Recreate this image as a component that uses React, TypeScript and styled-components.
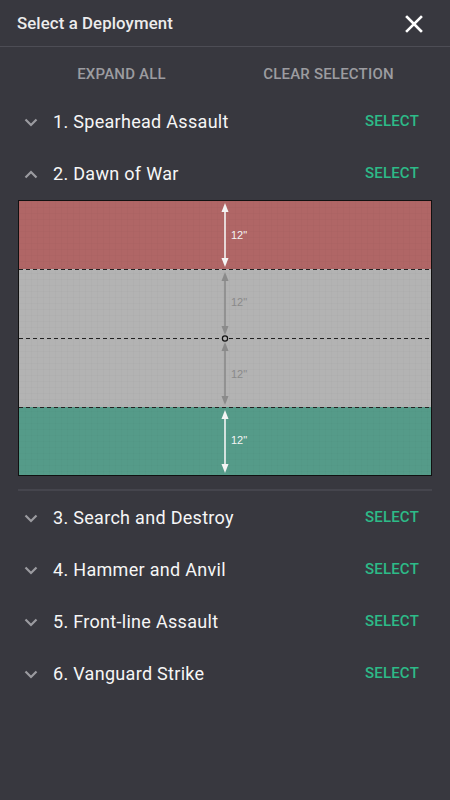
import React from "react";
import styled, { createGlobalStyle } from "styled-components";

const GlobalStyle = createGlobalStyle`
  html, body {
    margin: 0;
    padding: 0;
    background: #38383f;
  }
  body {
    font-family: Roboto, "Liberation Sans", sans-serif;
  }
`;

const deployments = [
    "Spearhead Assault",
    "Dawn of War",
    "Search and Destroy",
    "Hammer and Anvil",
    "Front-line Assault",
    "Vanguard Strike",
];

const Chevron = ({up}: { up?: boolean }) => (
    <svg width="14" height="9" viewBox="0 0 14 9">
        <path
            d={up ? "M1.5 7.5 L7 2 L12.5 7.5" : "M1.5 1.5 L7 7 L12.5 1.5"}
            fill="none"
            stroke="#9b9ba0"
            strokeWidth="2.2"
        />
    </svg>
);

const CloseIcon = () => (
    <svg width="18" height="18" viewBox="0 0 18 18">
        <path d="M2 2 L16 16 M16 2 L2 16" stroke="#ffffff" strokeWidth="2.6" strokeLinecap="square"/>
    </svg>
);

const Arrow = ({y1, y2, color}: { y1: number; y2: number; color: string }) => (
    <g>
        <line x1="206" y1={y1 + 8} x2="206" y2={y2 - 8} stroke={color} strokeWidth="1.6"/>
        <polygon points={`206,${y1} 202.5,${y1 + 9} 209.5,${y1 + 9}`} fill={color}/>
        <polygon points={`206,${y2} 202.5,${y2 - 9} 209.5,${y2 - 9}`} fill={color}/>
    </g>
);

const DawnOfWarMap = () => (
    <svg width="412" height="274" viewBox="0 0 412 274">
        <defs>
            <pattern id="grid" width="6" height="6" patternUnits="userSpaceOnUse">
                <path d="M6 0 L0 0 L0 6" fill="none" stroke="#000" strokeOpacity="0.03" strokeWidth="1"/>
            </pattern>
        </defs>
        <rect x="0" y="0" width="412" height="68" fill="#b06666"/>
        <rect x="0" y="68" width="412" height="138" fill="#b3b3b3"/>
        <rect x="0" y="206" width="412" height="68" fill="#559b89"/>
        <rect x="0" y="0" width="412" height="274" fill="url(#grid)"/>
        <line x1="0" y1="68.5" x2="412" y2="68.5" stroke="#222" strokeDasharray="4 3"/>
        <line x1="0" y1="137.5" x2="412" y2="137.5" stroke="#222" strokeDasharray="4 3"/>
        <line x1="0" y1="206.5" x2="412" y2="206.5" stroke="#222" strokeDasharray="4 3"/>
        <Arrow y1={2} y2={66} color="#f4f4f4"/>
        <Arrow y1={71} y2={134} color="#8a8a8a"/>
        <Arrow y1={141} y2={204} color="#8a8a8a"/>
        <Arrow y1={209} y2={272} color="#f4f4f4"/>
        <circle cx="206" cy="137.5" r="2.6" fill="#b3b3b3" stroke="#111" strokeWidth="1.2"/>
        <MapLabel x="212" y="38" fill="#f4f4f4">12"</MapLabel>
        <MapLabel x="212" y="105" fill="#8a8a8a">12"</MapLabel>
        <MapLabel x="212" y="177" fill="#8a8a8a">12"</MapLabel>
        <MapLabel x="212" y="243" fill="#f4f4f4">12"</MapLabel>
    </svg>
);

const App = () => {
    return (
        <>
            <GlobalStyle/>
            <Panel>
                <Header>
                    <Title>Select a Deployment</Title>
                    <CloseButton><CloseIcon/></CloseButton>
                </Header>
                <Actions>
                    <ActionButton>Expand all</ActionButton>
                    <ActionButton>Clear selection</ActionButton>
                </Actions>
                <List>
                    {deployments.map((name, i) => {
                        const open = i === 1;
                        return (
                            <Item key={name} $open={open}>
                                <Row>
                                    <ChevronBox><Chevron up={open}/></ChevronBox>
                                    <Name>{i + 1}. {name}</Name>
                                    <SelectButton>Select</SelectButton>
                                </Row>
                                {open && (
                                    <MapFrame>
                                        <DawnOfWarMap/>
                                    </MapFrame>
                                )}
                            </Item>
                        );
                    })}
                </List>
            </Panel>
        </>
    );
};

const Panel = styled.div`
  width: 450px;
  min-height: 800px;
  background: #38383f;
  color: #fff;
`;

const Header = styled.div`
  height: 46px;
  display: flex;
  align-items: center;
  justify-content: space-between;
  padding: 0 27px 0 17px;
  border-bottom: 1px solid #4d4d55;
`;

const Title = styled.div`
  font-size: 16.8px;
  font-weight: 500;
  color: #ececec;
  letter-spacing: 0.1px;
  padding-bottom: 1px;
`;

const CloseButton = styled.div`
  display: flex;
  align-items: center;
  margin-top: 1px;
`;

const Actions = styled.div`
  height: 48px;
  display: grid;
  grid-template-columns: 1fr 1fr;
  padding: 6px 18px 0 18px;
  box-sizing: border-box;
`;

const ActionButton = styled.div`
  display: flex;
  align-items: center;
  justify-content: center;
  font-size: 15px;
  font-weight: 500;
  text-transform: uppercase;
  color: #9c9ca0;
  letter-spacing: 0.2px;
`;

const List = styled.div`
  display: flex;
  flex-direction: column;
`;

const Item = styled.div<{ $open: boolean }>`
  display: flex;
  flex-direction: column;
  padding-bottom: ${p => (p.$open ? "13px" : "0")};
  border-bottom: ${p => (p.$open ? "2px solid #45454d" : "none")};
  margin: 0 18px;
`;

const Row = styled.div`
  height: 52px;
  display: flex;
  align-items: center;
  padding: 0 13px 0 6px;
`;

const ChevronBox = styled.div`
  width: 29px;
  display: flex;
  align-items: center;
  padding-top: 2px;
`;

const Name = styled.div`
  flex: 1;
  font-size: 18px;
  color: #f6f6f6;
  letter-spacing: 0.3px;
`;

const SelectButton = styled.div`
  font-size: 15px;
  font-weight: 500;
  text-transform: uppercase;
  color: #2dbb88;
  letter-spacing: 0.2px;
`;

const MapFrame = styled.div`
  margin-top: 1px;
  border: 1px solid #111;
  width: 412px;
  height: 274px;
  display: flex;
`;

const MapLabel = styled.text`
  font-family: "Liberation Sans", Arial, sans-serif;
  font-size: 11px;
`;

export default App;
